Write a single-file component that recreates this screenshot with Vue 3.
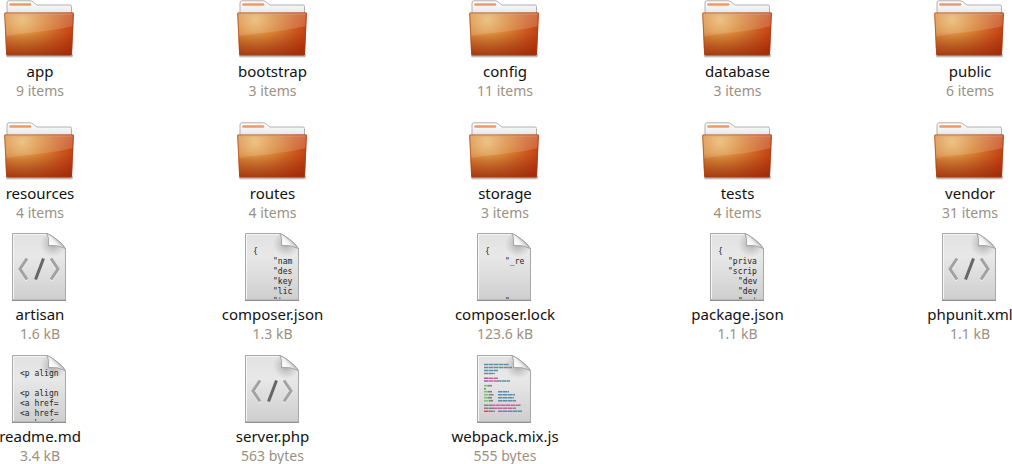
<script setup>
const folders = [
  { name: 'app', info: '9 items' },
  { name: 'bootstrap', info: '3 items' },
  { name: 'config', info: '11 items' },
  { name: 'database', info: '3 items' },
  { name: 'public', info: '6 items' },
  { name: 'resources', info: '4 items' },
  { name: 'routes', info: '4 items' },
  { name: 'storage', info: '3 items' },
  { name: 'tests', info: '4 items' },
  { name: 'vendor', info: '31 items' },
]

// Each preview line is [column, row, text]
const files = [
  { name: 'artisan', info: '1.6 kB', kind: 'script' },
  {
    name: 'composer.json', info: '1.3 kB', kind: 'text',
    lines: [[0, 0, '{'], [4, 1, '"nam'], [4, 2, '"des'], [4, 3, '"key'], [4, 4, '"lic'], [4, 5, '"typ']],
  },
  {
    name: 'composer.lock', info: '123.6 kB', kind: 'text',
    lines: [[0, 0, '{'], [4, 1, '"_re'], [4, 5, '"']],
  },
  {
    name: 'package.json', info: '1.1 kB', kind: 'text',
    lines: [[0, 0, '{'], [2, 1, '"priva'], [2, 2, '"scrip'], [4, 3, '"dev'], [4, 4, '"dev'], [4, 5, '"wat']],
  },
  { name: 'phpunit.xml', info: '1.1 kB', kind: 'script' },
  {
    name: 'readme.md', info: '3.4 kB', kind: 'text',
    lines: [[0, 0, '<p align'], [0, 2, '<p align'], [0, 3, '<a href='], [0, 4, '<a href='], [0, 5, '<a href=']],
  },
  { name: 'server.php', info: '563 bytes', kind: 'script' },
  { name: 'webpack.mix.js', info: '555 bytes', kind: 'code' },
]

const blue = '#5b8fa8'
const pink = '#c4649f'
const violet = '#a058b8'
const green = '#7cc46c'
const grey = '#808080'
const red = '#e04848'

// Syntax-coloured strokes: [x1, x2, y, colour]
const strokes = [
  [19, 44, 9.5, blue],
  [19, 47, 12.5, blue],
  [19, 33, 15.5, blue],
  [19, 30, 18.5, blue],
  [19, 24, 23.3, violet], [24, 33, 23.3, pink],
  [19, 24, 26, violet], [24, 32, 26, pink], [32, 45, 26, blue],
  [19, 23, 30.7, green], [23, 27, 30.7, grey],
  [19, 21, 33.7, grey],
  [19, 23, 36.7, green], [23, 27, 36.7, grey], [33, 44, 36.7, blue],
  [19, 24, 39.7, green], [24, 29, 39.7, grey], [33, 50, 39.7, blue],
  [19, 23, 42.7, green], [23, 27, 42.7, grey], [33, 49, 42.7, blue],
  [19, 24, 45.7, green], [24, 28, 45.7, grey], [33, 51, 45.7, blue],
  [19, 26, 50.3, grey], [26, 56, 50.3, pink],
  [19, 28, 53.3, grey], [28, 51, 53.3, pink],
  [19, 24, 56.2, red], [24, 30, 56.2, grey], [33, 57, 56.2, blue],
]
</script>

<template>
  <main class="view">
    <svg class="defs" aria-hidden="true">
      <defs>
        <radialGradient id="front" gradientUnits="userSpaceOnUse" cx="22" cy="20" r="56">
          <stop offset="0" stop-color="#e9b468" />
          <stop offset="0.35" stop-color="#d88838" />
          <stop offset="0.7" stop-color="#cc5c20" />
          <stop offset="1" stop-color="#c23a0e" />
        </radialGradient>
        <linearGradient id="gloss" x1="0" y1="0" x2="0" y2="1">
          <stop offset="0" stop-color="#ffffff" stop-opacity="0.22" />
          <stop offset="1" stop-color="#ffffff" stop-opacity="0.12" />
        </linearGradient>
        <linearGradient id="dusk" x1="0" y1="0" x2="0" y2="1">
          <stop offset="0.45" stop-color="#8c2408" stop-opacity="0" />
          <stop offset="1" stop-color="#8c2408" stop-opacity="0.6" />
        </linearGradient>
        <linearGradient id="back" x1="0" y1="0" x2="0" y2="1">
          <stop offset="0" stop-color="#ffffff" />
          <stop offset="1" stop-color="#e6e6e6" />
        </linearGradient>
        <linearGradient id="sheet" x1="0" y1="0" x2="0" y2="1">
          <stop offset="0" stop-color="#e2e2e2" />
          <stop offset="0.35" stop-color="#e8e8e8" />
          <stop offset="1" stop-color="#cecece" />
        </linearGradient>
        <linearGradient id="curl" gradientUnits="userSpaceOnUse" x1="47" y1="14" x2="57" y2="5">
          <stop offset="0" stop-color="#d4d4d4" />
          <stop offset="0.35" stop-color="#ffffff" />
          <stop offset="0.7" stop-color="#f0f0f0" />
          <stop offset="1" stop-color="#b4b4b4" />
        </linearGradient>
        <radialGradient id="shade" gradientUnits="userSpaceOnUse" cx="53" cy="11" r="13">
          <stop offset="0.2" stop-color="#8a8a8a" stop-opacity="0.5" />
          <stop offset="1" stop-color="#a0a0a0" stop-opacity="0" />
        </radialGradient>
        <clipPath id="preview"><rect x="18" y="10" width="42" height="56" /></clipPath>
        <g id="folder">
          <rect x="6" y="54" width="67" height="3" rx="1" fill="#bdbdbd" />
          <rect x="7" y="57" width="65" height="1" fill="#e8e8e8" />
          <path d="M7 14V3Q7 .8 9 .8H30Q32 .8 33.500 2.300L37 5H70Q71.500 5 71.500 6.500V14Z" fill="url(#back)" stroke="#b0b0b0" />
          <path d="M10.500 4.500H30" stroke="#ee9a66" stroke-width="2.600" stroke-linecap="round" />
          <path d="M5 12.500H73Q74 12.500 73.900 14L72 54Q72 55.500 70.500 55.500H8Q6.200 55.500 6.100 54L4.300 14Q4.200 12.500 5 12.500Z" fill="url(#front)" />
          <path d="M5 13H73L72 55H6.500Z" fill="url(#dusk)" />
          <path d="M5 13H73.500L73 26C50 32 28 32 5.500 36.500Z" fill="url(#gloss)" />
          <path d="M5 13H73.300L71.500 53.500Q71.500 55 70 55H8Q6.600 55 6.600 53.500L4.700 14Z" fill="none" stroke="#a83c18" stroke-opacity=".6" />
          <path d="M5.500 14H72.800" stroke="#e8a27a" stroke-opacity=".6" />
        </g>
        <g id="paper">
          <path d="M12.500 .5H47Q51 2 56 6Q63 11 65.500 16V67H12.500Z" fill="url(#sheet)" stroke="#a8a8a8" />
          <path d="M38 1H47L65 16V26H38Z" fill="url(#shade)" />
          <path d="M13.500 66V1.500H46" fill="none" stroke="#f6f6f6" />
          <path d="M47 .5Q49.500 5 48.500 12.500Q57 11.500 65.500 15.500Q62 10 56 6Q51 2 47 .5Z" fill="url(#curl)" stroke="#999" stroke-width=".8" />
          <path d="M12 67.500H66" stroke="#8f8f8f" />
        </g>
      </defs>
    </svg>

    <ul class="entries">
      <li v-for="item in folders" :key="item.name" class="entry">
        <svg class="icon" viewBox="0 0 78 58" aria-hidden="true"><use href="#folder" /></svg>
        <span class="name">{{ item.name }}</span>
        <span class="info">{{ item.info }}</span>
      </li>
    </ul>

    <ul class="entries files">
      <li v-for="item in files" :key="item.name" class="entry">
        <svg class="icon" viewBox="0 0 78 68" aria-hidden="true">
          <use href="#paper" />
          <g v-if="item.kind === 'script'" fill="none" stroke-width="3">
            <path d="M27 26.500L20 37L27 47.500M51 26.500L58 37L51 47.500" stroke="#f4f4f4" />
            <path d="M27 25.500L20 36L27 46.500M51 25.500L58 36L51 46.500" stroke="#a2a2a2" />
            <path d="M43.500 25.500L35.500 46.500" stroke="#666" />
          </g>
          <g v-else-if="item.kind === 'text'" clip-path="url(#preview)">
            <text
              v-for="([col, row, text], i) in item.lines"
              :key="i"
              class="code"
              :x="20 + col * 5"
              :y="21 + row * 10"
            >{{ text }}</text>
          </g>
          <g v-else stroke-width="1.600" stroke-dasharray="4.600 .4">
            <path
              v-for="([x1, x2, y, colour], i) in strokes"
              :key="i"
              :d="`M${x1} ${y}H${x2}`"
              :stroke="colour"
            />
          </g>
        </svg>
        <span class="name">{{ item.name }}</span>
        <span class="info">{{ item.info }}</span>
      </li>
    </ul>
  </main>
</template>

<style>
body {
  background: #fff;
}
</style>

<style scoped>
.view {
  padding-right: 4px;
  overflow: hidden;
  font-family: "Noto Sans", "Open Sans", sans-serif;
  font-size: 15px;
  line-height: 20px;
}

.defs {
  position: absolute;
  width: 0;
  height: 0;
}

.entries {
  display: grid;
  grid-template-columns: repeat(5, 78px);
  justify-content: space-between;
  row-gap: 21px;
  margin: 0;
  padding: 0;
  list-style: none;
}

.files {
  margin-top: 10px;
  row-gap: 11px;
}

.entry {
  display: flex;
  flex-direction: column;
  align-items: center;
  white-space: nowrap;
}

.icon {
  width: 78px;
  margin-bottom: 3px;
}

.name,
.info {
  padding-left: 2px;
}

.name {
  color: #111;
}

.info {
  color: #9c9083;
  font-size: 14px;
}

.code {
  font: 8px "DejaVu Sans Mono", monospace;
  fill: #222;
}
</style>
